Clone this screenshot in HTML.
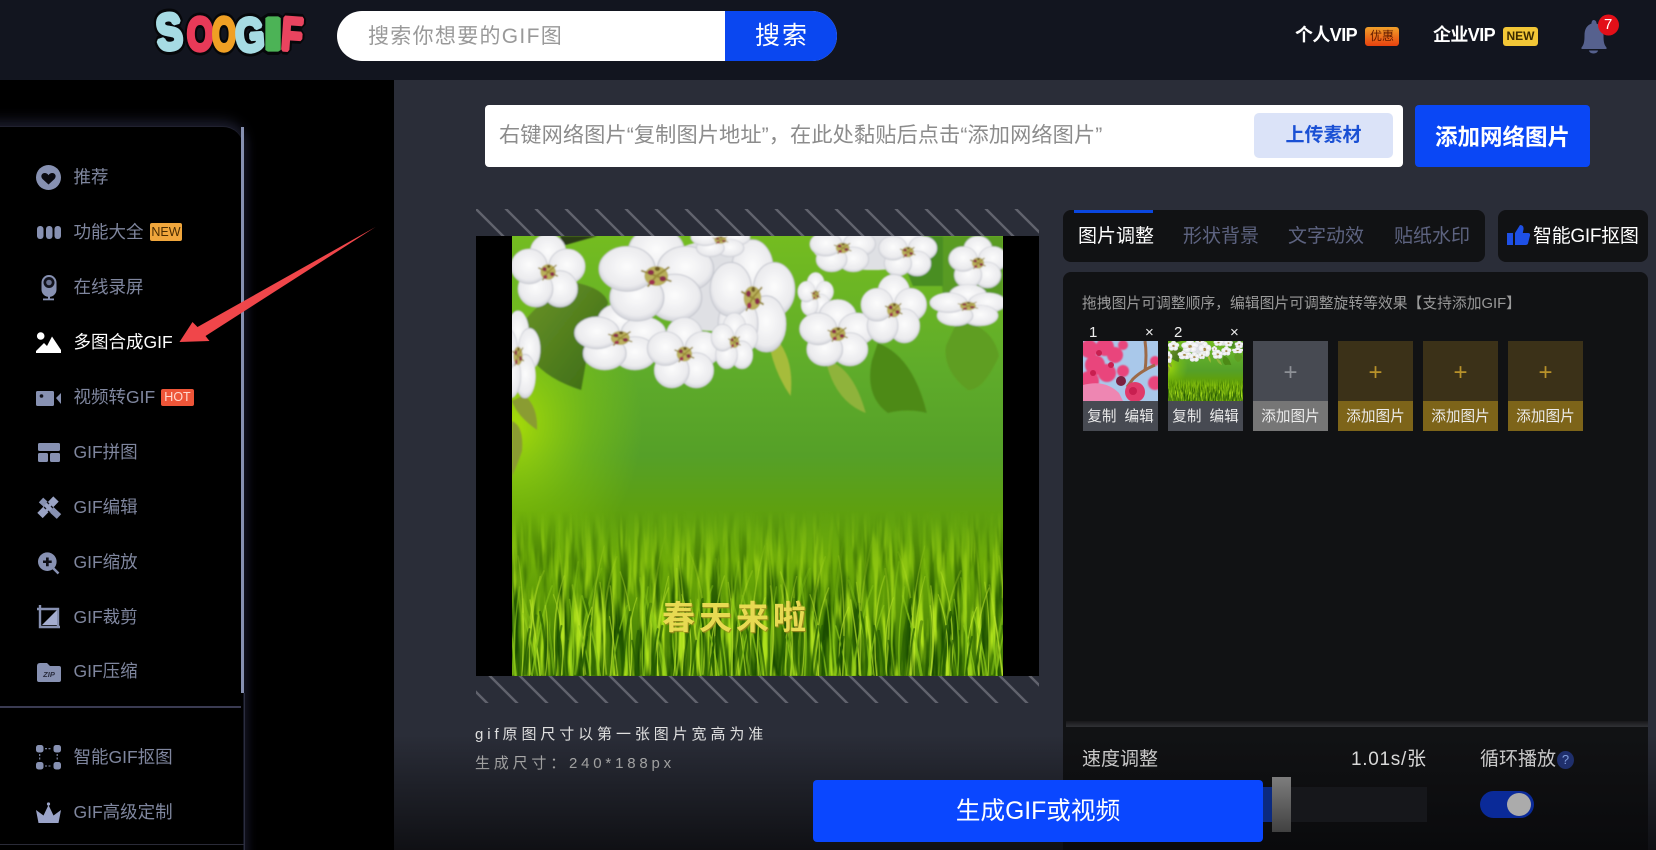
<!DOCTYPE html>
<html lang="zh"><head><meta charset="utf-8"><title>SOOGIF</title>
<style>
html,body{margin:0;padding:0;background:#000;}
body{width:1656px;height:850px;position:relative;overflow:hidden;font-family:"Liberation Sans","Noto Sans CJK SC",sans-serif;}
div,span{box-sizing:border-box;}
.a{position:absolute;}
.t{position:absolute;white-space:nowrap;line-height:30px;height:30px;}
.s{left:73.5px;font-size:17.5px;color:#7f869e;}
.tab{font-size:19px;color:#5d6380;top:222px;}
.thumb{position:absolute;top:341px;width:75px;height:90px;overflow:hidden;}
.thumb .p{position:absolute;left:0;top:3px;width:75px;height:60px;text-align:center;line-height:58px;font-size:24px;font-weight:300;}
.thumb .c{position:absolute;left:0;top:61px;width:75px;height:30px;text-align:center;line-height:30px;font-size:14.6px;color:#ececec;white-space:nowrap;}
.thumb .b{position:absolute;left:0;top:60px;width:75px;height:30px;}
.num{position:absolute;top:321px;font-size:15px;line-height:24px;color:#eee;}
</style></head><body>

<!-- header -->
<div class="a" style="left:0;top:0;width:1656px;height:80px;background:#12151f;"></div>
<svg class="a" style="left:150px;top:8px;" width="165" height="60" viewBox="0 0 165 60">
 <g font-family="Liberation Sans,sans-serif" font-weight="700" font-size="42" text-anchor="middle" stroke-linejoin="bevel">
  <g stroke="#06070a" stroke-width="9">
   <text transform="translate(21,41) rotate(-6) scale(.92,1.2)" fill="#06070a">S</text>
   <text transform="translate(50,42) scale(.8,1.1)" fill="#06070a">O</text>
   <text transform="translate(74,42) scale(.72,1.1)" fill="#06070a">O</text>
   <text transform="translate(101,43) rotate(-4) scale(.88,1.12)" fill="#06070a">G</text>
   <text transform="translate(123,42) scale(1.7,1.1)" fill="#06070a">I</text>
   <text transform="translate(141,42) rotate(4) scale(.82,1.1)" fill="#06070a">F</text>
  </g>
  <text transform="translate(21,41) rotate(-6) scale(.92,1.2)" fill="#a6dbe3" stroke="#a6dbe3" stroke-width="4">S</text>
  <text transform="translate(50,42) scale(.8,1.1)" fill="#e83a58" stroke="#e83a58" stroke-width="4">O</text>
  <text transform="translate(74,42) scale(.72,1.1)" fill="#f0a024" stroke="#f0a024" stroke-width="4">O</text>
  <text transform="translate(101,43) rotate(-4) scale(.88,1.12)" fill="#a6dbe3" stroke="#a6dbe3" stroke-width="4">G</text>
  <text transform="translate(123,42) scale(1.7,1.1)" fill="#4cb356" stroke="#4cb356" stroke-width="3">I</text>
  <text transform="translate(141,42) rotate(4) scale(.82,1.1)" fill="#e9445f" stroke="#e9445f" stroke-width="4">F</text>
 </g>
</svg>
<div class="a" style="left:337px;top:11px;width:500px;height:50px;background:#fff;border-radius:25px;overflow:hidden;">
 <div class="a" style="left:388px;top:0;width:112px;height:50px;background:#0a47f0;"></div>
 <div class="t" style="left:31px;top:11px;font-size:21px;letter-spacing:1.3px;color:#999;">搜索你想要的GIF图</div>
 <div class="t" style="left:418px;top:10px;font-size:25px;letter-spacing:2px;color:#fff;">搜索</div>
</div>
<div class="t" style="left:1295px;top:20px;font-size:18px;font-weight:700;color:#fff;letter-spacing:-.6px;">个人VIP</div>
<div class="a" style="left:1365px;top:27px;width:34px;height:19px;border-radius:3px;background:linear-gradient(#f0a02a,#e8420f);color:#5f1a00;font-size:12px;line-height:19px;text-align:center;">优惠</div>
<div class="t" style="left:1433px;top:20px;font-size:18px;font-weight:700;color:#fff;letter-spacing:-.6px;">企业VIP</div>
<div class="a" style="left:1503px;top:27px;width:35px;height:19px;border-radius:3px;background:#f2c636;color:#3a2a00;font-size:12px;font-weight:700;line-height:19px;text-align:center;">NEW</div>
<svg class="a" style="left:1575px;top:12px;" width="50" height="46" viewBox="1575 12 50 46">
 <path fill="#56618e" d="M1593.500 20c2 0 3 1.500 3 3.500c5 2 7 6 7 12c0 6 .5 9 3 12v1.500h-25v-1.500c2.500-3 3-6 3-12c0-6 2-10 7-12c0-2 1-3.500 2-3.500z"/>
 <path fill="#56618e" d="M1589 50.500a4.500 3 0 0 0 9 0z"/>
 <circle cx="1608.500" cy="25" r="10.500" fill="#e30f18"/>
</svg>
<div class="t" style="left:1604px;top:10px;font-size:15px;color:#fff;">7</div>

<!-- sidebar -->
<div class="a" style="left:0;top:80px;width:394px;height:770px;background:#000;overflow:hidden;">
 <div class="a" style="left:-30px;top:46px;width:273px;height:740px;background:#000;border-radius:0 20px 0 0;border-top:1px solid #20212f;box-shadow:0 -4px 14px 1px #1c1d2c,4px 0 10px #0e0f1a;"></div>
 <div class="a" style="left:241px;top:47px;width:3px;height:566px;background:#8791b2;"></div>
 <div class="a" style="left:244px;top:613px;width:1px;height:157px;background:#2c2e40;"></div>
 <div class="a" style="left:0;top:626px;width:241px;height:2px;background:#3a3b52;"></div>
 <div class="a" style="left:0;top:764px;width:244px;height:1px;background:#2a2b38;"></div>
</div>
<div class="t s" style="top:162px;">推荐</div>
<div class="t s" style="top:217px;">功能大全</div>
<div class="a" style="left:150px;top:223px;width:32px;height:18px;background:#f0a63c;border-radius:2px;color:#4a2c00;font-size:12.500px;line-height:18px;text-align:center;">NEW</div>
<div class="t s" style="top:272px;">在线录屏</div>
<div class="t s" style="top:327px;color:#fff;">多图合成GIF</div>
<div class="t s" style="top:382px;">视频转GIF</div>
<div class="a" style="left:161px;top:389px;width:33px;height:17px;background:#ee5538;border-radius:2px;color:#ffd9cf;font-size:12.500px;line-height:17px;text-align:center;">HOT</div>
<div class="t s" style="top:437px;">GIF拼图</div>
<div class="t s" style="top:492px;">GIF编辑</div>
<div class="t s" style="top:547px;">GIF缩放</div>
<div class="t s" style="top:602px;">GIF裁剪</div>
<div class="t s" style="top:656px;">GIF压缩</div>
<div class="t s" style="top:742px;">智能GIF抠图</div>
<div class="t s" style="top:797px;">GIF高级定制</div>

<svg class="a" style="left:0;top:0;" width="394" height="850" viewBox="0 0 394 850">
 <g fill="#8791b2">
  <circle cx="48.500" cy="177.500" r="12.500"/>
  <path fill="#0a0a10" d="M48.500 184.500l-6-5.500c-2.500-3-.5-6 2.200-6c1.700 0 3 .9 3.800 2.200c.8-1.300 2.100-2.200 3.800-2.200c2.700 0 4.700 3 2.200 6z"/>
  <rect x="37" y="226" width="6.500" height="13" rx="3"/><rect x="46" y="226" width="6.500" height="13" rx="3"/><rect x="54.500" y="226" width="6.500" height="13" rx="3"/>
  <rect x="41.500" y="275" width="15" height="22" rx="7.500"/>
  <circle cx="49" cy="282.500" r="5.500" fill="#12131c"/><circle cx="49" cy="282.500" r="2.800" fill="#6b7391"/>
  <rect x="48" y="296" width="2" height="3"/><rect x="43" y="298.500" width="11" height="1.800"/>
  <rect x="36" y="391" width="18" height="15" rx="1.500"/><circle cx="41.500" cy="396" r="1.800" fill="#10111a"/><path d="M56 398l5-5v11z"/>
  <rect x="38" y="443" width="22" height="8" rx="1.500"/><rect x="38" y="453" width="10" height="9" rx="1.500"/><rect x="50" y="453" width="10" height="9" rx="1.500"/>
  <path d="M41 500l18 16.500" stroke="#8791b2" stroke-width="6.500" fill="none"/>
  <path d="M56 499l-16 16.500" stroke="#9aa3c4" stroke-width="7.500" fill="none"/>
  <path d="M47 502l2 2M51 506l2 2M44 507l2 2M48 511l2 2" stroke="#10111a" stroke-width="1.300"/>
  <circle cx="47.300" cy="561.700" r="9.300"/><path d="M53 568l5.500 5.500" stroke="#8791b2" stroke-width="2.500" fill="none"/>
  <path d="M46 557.500h2.700v3h3v2.500h-3v3.200H46V563h-3v-2.500h3z" fill="#0d0e15"/>
  <path d="M40 605v22h20M37 609h21v18" fill="none" stroke="#8791b2" stroke-width="2.400"/>
  <path d="M42 625l15-15v15z" fill="#a4add0"/>
  <path d="M37 666q0-3 3-3h7l3 3h9q2 0 2 2v12q0 2-2 2H39q-2 0-2-2z"/>
  <rect x="36" y="745" width="7.500" height="7.500" rx="2.500"/><rect x="53.500" y="745" width="7.500" height="7.500" rx="2.500"/><rect x="36" y="762" width="7.500" height="7.500" rx="2.500"/><rect x="53.500" y="762" width="7.500" height="7.500" rx="2.500"/>
  <path d="M45 748.700h7M45 766h7M39.700 754v7M57.200 754v7" stroke="#8791b2" stroke-width="1.100" stroke-dasharray="2 1.500" fill="none"/>
  <path d="M38.500 823L36 810l7.500 5.500L48.500 805l5 10.500L61 810l-2.500 13z" fill="#9aa3c8"/><circle cx="48.500" cy="804" r="1.600" fill="#9aa3c8"/>
 </g>
 <text x="49" y="677" font-family="Liberation Sans,sans-serif" font-size="7.500" font-weight="700" font-style="italic" fill="#2a2d3e" text-anchor="middle">ZIP</text>
 <g fill="#fff"><circle cx="40.700" cy="336" r="3.800"/><path d="M36 353v-2l8-8l3 3l5-9.500l9 13.500v3z"/></g>
 <path fill="#f0464a" d="M179.500 342l13-20l5 5l178-100l-170 109l4 5z"/>
</svg>

<!-- content -->
<div class="a" style="left:394px;top:80px;width:1262px;height:770px;background:#2a2d38;"></div>
<div class="a" style="left:485px;top:105px;width:918px;height:62px;background:#fff;border-radius:4px;"></div>
<div class="t" style="left:499px;top:121px;font-size:21.200px;letter-spacing:.1px;color:#8c8c8c;">右键网络图片“复制图片地址”，在此处黏贴后点击“添加网络图片”</div>
<div class="a" style="left:1254px;top:113px;width:139px;height:45px;background:#dbe3f8;border-radius:5px;color:#1a50d4;font-size:19px;font-weight:700;line-height:46px;text-align:center;">上传素材</div>
<div class="a" style="left:1415px;top:105px;width:175px;height:62px;background:#0a47f5;border-radius:4px;color:#fff;font-size:22.500px;font-weight:700;line-height:65px;text-align:center;">添加网络图片</div>

<!-- preview -->
<svg class="a" style="left:476px;top:209px;" width="563" height="494" viewBox="476 209 563 494">
 <defs>
  <pattern id="h1" width="30" height="30" patternUnits="userSpaceOnUse" patternTransform="translate(476,209)"><path d="M-5-5L35 35M-5 25L5 35M25-5L35 5" stroke="#61636d" stroke-width="2.400" fill="none"/></pattern>
  <pattern id="h2" width="30" height="30" patternUnits="userSpaceOnUse" patternTransform="translate(490,676)"><path d="M-5-5L35 35M-5 25L5 35M25-5L35 5" stroke="#61636d" stroke-width="2.400" fill="none"/></pattern>
 </defs>
 <rect x="476" y="209" width="563" height="27" fill="url(#h1)"/>
 <rect x="476" y="676" width="563" height="27" fill="url(#h2)"/>
</svg>
<div class="a" style="left:476px;top:236px;width:563px;height:440px;background:#000;"></div>

<svg width="0" height="0" style="position:absolute">
 <defs>
  <linearGradient id="bgG" x1="0" y1="0" x2="0" y2="1">
   <stop offset="0" stop-color="#74bc20"/><stop offset=".3" stop-color="#5fac2a"/><stop offset=".5" stop-color="#55a028"/><stop offset=".62" stop-color="#5ea010"/><stop offset=".74" stop-color="#6eac08"/><stop offset="1" stop-color="#3c7404"/>
  </linearGradient>
  <radialGradient id="lime" cx=".5" cy=".5" r=".5"><stop offset="0" stop-color="#bdea00" stop-opacity=".8"/><stop offset=".6" stop-color="#9ad800" stop-opacity=".3"/><stop offset="1" stop-color="#9ad800" stop-opacity="0"/></radialGradient>
  <linearGradient id="gm1" gradientUnits="userSpaceOnUse" x1="0" y1="275" x2="0" y2="385"><stop offset="0" stop-color="#000"/><stop offset="1" stop-color="#fff"/></linearGradient>
  <linearGradient id="gm2" gradientUnits="userSpaceOnUse" x1="0" y1="295" x2="0" y2="390"><stop offset="0" stop-color="#000"/><stop offset="1" stop-color="#fff"/></linearGradient>
  <mask id="m1" maskUnits="userSpaceOnUse" x="0" y="0" width="490" height="440"><rect width="490" height="440" fill="url(#gm1)"/></mask>
  <mask id="m2" maskUnits="userSpaceOnUse" x="0" y="0" width="490" height="440"><rect width="490" height="440" fill="url(#gm2)"/></mask>
  <linearGradient id="lf" x1="0" y1="0" x2="1" y2="1"><stop offset="0" stop-color="#6b9428"/><stop offset="1" stop-color="#3a6a14"/></linearGradient>
  <radialGradient id="pet" cx=".5" cy=".45" r=".62"><stop offset="0" stop-color="#fcfcfc"/><stop offset=".7" stop-color="#ebebee"/><stop offset="1" stop-color="#c2c4cc"/></radialGradient>
  <filter id="soft" x="-10%" y="-10%" width="120%" height="120%"><feGaussianBlur stdDeviation=".7"/></filter>
  <filter id="sBright" x="0" y="0" width="100%" height="100%" color-interpolation-filters="sRGB">
   <feTurbulence type="fractalNoise" baseFrequency=".18 .014" numOctaves="3" seed="7"/>
   <feColorMatrix values="0 0 0 0 .68  0 0 0 0 .88  0 0 0 0 .1  5 0 0 0 -2.500"/>
   <feGaussianBlur stdDeviation=".5"/>
  </filter>
  <filter id="sDark" x="0" y="0" width="100%" height="100%" color-interpolation-filters="sRGB">
   <feTurbulence type="fractalNoise" baseFrequency=".12 .012" numOctaves="3" seed="21"/>
   <feColorMatrix values="0 0 0 0 .1  0 0 0 0 .3  0 0 0 0 0  5 0 0 0 -2.200"/>
   <feGaussianBlur stdDeviation=".5"/>
  </filter>
  <g id="fl">
   <g fill="url(#pet)" stroke="#c4c6ce" stroke-width="1">
    <ellipse cx="0" cy="-27" rx="26" ry="27"/><ellipse cx="27" cy="-8" rx="26" ry="25"/><ellipse cx="17" cy="24" rx="25" ry="26"/><ellipse cx="-18" cy="24" rx="25" ry="26"/><ellipse cx="-27" cy="-8" rx="26" ry="25"/>
   </g>
   <circle r="11" fill="#b9b05a"/><path d="M0 0L-14-6M0 0L12-10M0 0L14 6M0 0L-8 12" stroke="#9a8c38" stroke-width="2"/>
   <circle cx="-5" cy="-4" r="3" fill="#8a2f4a"/><circle cx="6" cy="3" r="3" fill="#8a2f4a"/><circle cx="1" cy="-8" r="2.400" fill="#6e5a20"/><circle cx="-4" cy="7" r="2.800" fill="#9e3050"/>
  </g>
  <g id="bl" fill="none" stroke-linecap="round">
   <g stroke="#c0e82c" stroke-width="1.400">
    <path d="M10 160Q14 90 6 40"/><path d="M44 160Q38 100 52 60"/><path d="M78 160Q76 90 92 30"/><path d="M118 160Q124 100 108 56"/><path d="M146 160Q140 110 156 72"/>
    <path d="M28 160Q24 120 18 84"/><path d="M98 160Q104 110 98 70"/>
   </g>
   <g stroke="#8ecb18" stroke-width="1.800">
    <path d="M20 160Q28 100 40 70"/><path d="M60 160Q56 110 66 46"/><path d="M88 160Q82 120 70 80"/><path d="M132 160Q136 110 128 62"/><path d="M154 160Q150 130 140 96"/><path d="M4 160Q0 120 -4 90"/>
   </g>
   <g stroke="#235a02" stroke-width="2.400">
    <path d="M34 160Q34 120 28 96"/><path d="M70 160Q74 120 78 100"/><path d="M110 160Q112 125 118 96"/><path d="M142 160Q146 130 150 110"/><path d="M52 160Q50 135 46 115"/><path d="M126 160Q122 135 126 115"/>
   </g>
  </g>
  <pattern id="gp1" width="160" height="160" patternUnits="userSpaceOnUse" patternTransform="translate(0,280)"><use href="#bl"/></pattern>
  <pattern id="gp2" width="160" height="160" patternUnits="userSpaceOnUse" patternTransform="translate(37,250) scale(1.3,1.18)"><use href="#bl"/></pattern>
  <pattern id="gp3" width="160" height="160" patternUnits="userSpaceOnUse" patternTransform="translate(83,315) scale(.8,.78)"><use href="#bl"/></pattern>
  <symbol id="spring" viewBox="0 0 490 440" preserveAspectRatio="none">
   <rect width="490" height="440" fill="url(#bgG)"/>
   <ellipse cx="0" cy="190" rx="130" ry="150" fill="url(#lime)"/>
   <g mask="url(#m1)">
    <rect x="0" y="230" width="490" height="210" filter="url(#sDark)"/>
    <rect x="0" y="230" width="490" height="210" filter="url(#sBright)"/>
   </g>
   <g mask="url(#m2)">
    <rect x="0" y="270" width="490" height="170" fill="url(#gp2)" opacity=".5"/>
    <rect x="0" y="300" width="490" height="140" fill="url(#gp1)" opacity=".7"/>
    <rect x="0" y="340" width="490" height="100" fill="url(#gp3)" opacity=".7"/>
   </g>
   <g filter="url(#soft)">
    <path d="M425 0H490V60H430z" fill="#4f8f22" opacity=".7"/>
    <path d="M380 0h50v50h-30z" fill="#4a8e24"/>
    <path d="M61 46Q92 52 96 67L76 114L69 154Q25 140 13 111Q10 90 13 84Q35 58 61 46z" fill="url(#lf)"/>
    <path d="M265 104Q282 125 278 160Q264 140 258 115z" fill="#a6bc3a"/>
    <path d="M313 124Q340 130 353 177Q322 165 313 124z" fill="#8fb33a"/>
    <path d="M365 107Q400 120 414 177Q395 172 375 177Q352 160 359 125z" fill="#4d8a18"/>
    <path d="M445 84Q480 90 486 120Q470 155 455 154Q430 135 433 110z" fill="#5f9e20"/>
    <path d="M0 165L12 159Q26 170 25 194Q5 180 0 165zM0 185Q12 190 10 215Q5 230 0 240z" fill="#8a9c30"/>
    <path d="M48 0L85 0L50 10z" fill="#2c3a18"/>
    <g fill="#dfe0e4"><ellipse cx="200" cy="50" rx="60" ry="45"/><ellipse cx="360" cy="12" rx="60" ry="22"/></g>
    <use href="#fl" transform="translate(330,12) scale(.62,.48)"/>
    <use href="#fl" transform="translate(395,16) scale(.55,.48)"/>
    <use href="#fl" transform="translate(465,27) scale(.55,.5)"/>
    <use href="#fl" transform="translate(455,70) scale(.72,.4)"/>
    <use href="#fl" transform="translate(303,59) scale(.34,.42)"/>
    <use href="#fl" transform="translate(325,98) scale(.72,.64)"/>
    <use href="#fl" transform="translate(381,74) scale(.62,.66)"/>
    <use href="#fl" transform="translate(36,36) scale(.7,.7)"/>
    <use href="#fl" transform="translate(6,120) scale(.42,.84)"/>
    <use href="#fl" transform="translate(108,102) scale(.86,.64)"/>
    <use href="#fl" transform="translate(240,62) scale(.8,1.08)"/>
    <use href="#fl" transform="translate(144,40) scale(1.08,.9)"/>
    <use href="#fl" transform="translate(172,118) scale(.7,.68)"/>
    <use href="#fl" transform="translate(222,106) scale(.44,.54)"/>
    <use href="#fl" transform="translate(208,4) scale(.56,.34)"/>
   </g>
  </symbol>
 </defs>
</svg>
<svg class="a" style="left:512px;top:236px;" width="491" height="440"><use href="#spring" width="491" height="440"/></svg>
<div class="t" style="left:662px;top:601px;height:34px;line-height:34px;font-size:33px;font-weight:700;letter-spacing:4px;color:#e8da52;text-shadow:1px 1px 1px #a08a20;">春天来啦</div>

<div class="t" style="left:475px;top:720px;font-size:15px;letter-spacing:3.900px;color:#e0e0e0;">gif原图尺寸以第一张图片宽高为准</div>
<div class="t" style="left:475px;top:749px;font-size:15px;letter-spacing:3.800px;color:#c4c4c4;">生成尺寸：240*188px</div>

<!-- right tabs -->
<div class="a" style="left:1063px;top:210px;width:422px;height:52px;background:#111214;border-radius:8px;"></div>
<div class="a" style="left:1074px;top:210px;width:79px;height:3px;background:#0a47e0;"></div>
<div class="t tab" style="left:1078px;color:#fff;">图片调整</div>
<div class="t tab" style="left:1183px;">形状背景</div>
<div class="t tab" style="left:1288px;">文字动效</div>
<div class="t tab" style="left:1394px;">贴纸水印</div>
<div class="a" style="left:1498px;top:210px;width:150px;height:52px;background:#111214;border-radius:8px;"></div>
<svg class="a" style="left:1505px;top:222px;" width="26" height="26" viewBox="0 0 26 26"><path fill="#1e50e6" d="M2 11h6v12H2zM10 11l5-8q4 0 3.500 4.500l-.7 3.500h5.200q2.500 0 2 2.500l-2 8q-.5 1.500-2.500 1.500H10z"/></svg>
<div class="t" style="left:1533px;top:222px;font-size:19px;color:#fff;letter-spacing:-.3px;">智能GIF抠图</div>

<!-- panel -->
<div class="a" style="left:1063px;top:272px;width:585px;height:578px;background:#111214;border-radius:8px 8px 0 0;"></div>
<div class="t" style="left:1082px;top:289px;font-size:14.800px;color:#9a9a9a;">拖拽图片可调整顺序，编辑图片可调整旋转等效果【支持添加GIF】</div>

<div class="num" style="left:1089px;">1</div><div class="num" style="left:1145px;">×</div>
<div class="num" style="left:1174px;">2</div><div class="num" style="left:1230px;">×</div>

<div class="thumb" style="left:1083px;background:#474a52;">
 <svg class="a" style="left:0;top:0;" width="75" height="60" viewBox="0 0 75 60">
  <rect width="75" height="60" fill="#a9c8ea"/>
  <g fill="#e9457c" filter="url(#soft)">
   <circle cx="6" cy="8" r="9"/><circle cx="22" cy="6" r="9"/><circle cx="12" cy="24" r="10"/><circle cx="32" cy="14" r="8"/><circle cx="24" cy="32" r="9"/><circle cx="6" cy="40" r="10"/><circle cx="40" cy="4" r="5"/><circle cx="40" cy="30" r="6"/><circle cx="72" cy="20" r="5"/><circle cx="72" cy="42" r="7"/>
  </g>
  <path d="M72 24Q58 30 50 38L44 46M62 0Q64 14 62 30" stroke="#9c6a48" stroke-width="3" fill="none"/>
  <path d="M0 44Q22 38 36 52L40 60H0z" fill="#ee86b2"/>
  <circle cx="52" cy="51" r="10" fill="#e03a6a"/><circle cx="38" cy="40" r="5" fill="#7a2040"/>
  <g fill="#c81f50"><circle cx="16" cy="12" r="3"/><circle cx="28" cy="24" r="3"/><circle cx="10" cy="32" r="3"/><circle cx="50" cy="50" r="4"/></g>
 </svg>
 <div class="c"><span>复制</span>&nbsp;&nbsp;<span>编辑</span></div>
</div>
<div class="thumb" style="left:1168px;background:#474a52;">
 <svg class="a" style="left:0;top:0;" width="75" height="60"><use href="#spring" width="75" height="60"/></svg>
 <div class="c"><span>复制</span>&nbsp;&nbsp;<span>编辑</span></div>
</div>
<div class="thumb" style="left:1253px;background:#474a52;"><div class="b" style="background:#767676;"></div><div class="p" style="color:#8e9197;">+</div><div class="c">添加图片</div></div>
<div class="thumb" style="left:1338px;background:#3b3118;"><div class="b" style="background:#7d6419;"></div><div class="p" style="color:#b8922a;">+</div><div class="c">添加图片</div></div>
<div class="thumb" style="left:1423px;background:#3b3118;"><div class="b" style="background:#7d6419;"></div><div class="p" style="color:#b8922a;">+</div><div class="c">添加图片</div></div>
<div class="thumb" style="left:1508px;background:#3b3118;"><div class="b" style="background:#7d6419;"></div><div class="p" style="color:#b8922a;">+</div><div class="c">添加图片</div></div>

<!-- lower controls -->
<div class="a" style="left:1066px;top:721px;width:582px;height:6px;background:linear-gradient(#18181a,#303135);"></div>

<!-- fade -->
<div class="a" style="left:394px;top:735px;width:1262px;height:115px;background:linear-gradient(rgba(8,8,10,0),rgba(8,8,10,.78));"></div>

<div class="t" style="left:1082px;top:745px;font-size:19px;color:#c8c8c8;">速度调整</div>
<div class="t" style="left:1351px;top:745px;font-size:19px;letter-spacing:.7px;color:#d8d8d8;">1.01s/张</div>
<div class="t" style="left:1480px;top:745px;font-size:19px;color:#c8c8c8;">循环播放</div>
<div class="a" style="left:1557px;top:751px;width:17px;height:18px;border-radius:50%;background:#1f2f6c;color:#7f9cdc;font-size:13px;line-height:18px;text-align:center;">?</div>

<div class="a" style="left:1263px;top:787px;width:164px;height:35px;background:#16171b;"></div>
<div class="a" style="left:1263px;top:787px;width:10px;height:35px;background:#0b2a80;"></div>
<div class="a" style="left:1272px;top:777px;width:19px;height:55px;background:linear-gradient(#7d7d7d,#414141);"></div>
<div class="a" style="left:1480px;top:791px;width:54px;height:27px;border-radius:14px;background:#0a2a98;"></div>
<div class="a" style="left:1507px;top:793px;width:24px;height:23px;border-radius:50%;background:#ababab;"></div>

<div class="a" style="left:813px;top:780px;width:450px;height:62px;background:#0a47ff;border-radius:4px;color:#fff;font-size:24.700px;line-height:64px;text-align:center;">生成GIF或视频</div>

</body></html>
